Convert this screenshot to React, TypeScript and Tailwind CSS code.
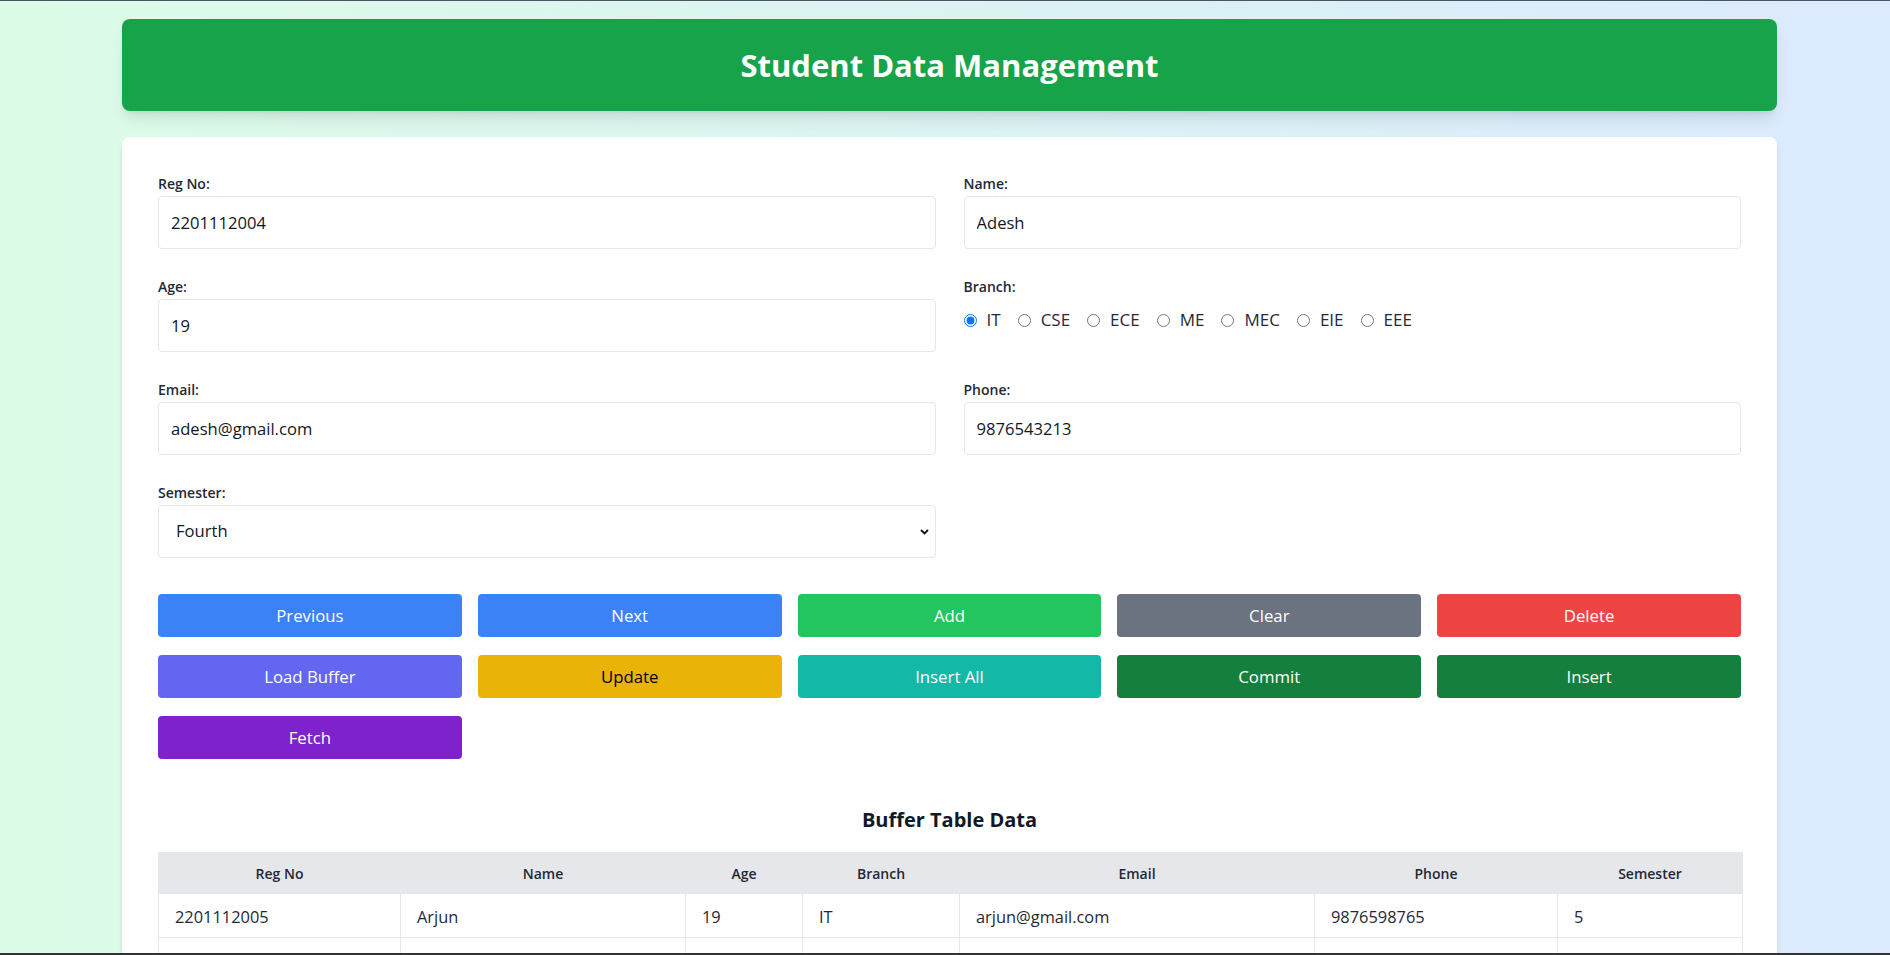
import React from "react";

const font = { fontFamily: '"Open Sans", "Noto Sans", Arial, sans-serif' };

const branches = ["IT", "CSE", "ECE", "ME", "MEC", "EIE", "EEE"];

const buttons: { text: string; cls: string }[] = [
  { text: "Previous", cls: "bg-[#3b82f6] text-white" },
  { text: "Next", cls: "bg-[#3b82f6] text-white" },
  { text: "Add", cls: "bg-[#22c55e] text-white" },
  { text: "Clear", cls: "bg-[#6b7280] text-white" },
  { text: "Delete", cls: "bg-[#ef4444] text-white" },
  { text: "Load Buffer", cls: "bg-[#6366f1] text-white" },
  { text: "Update", cls: "bg-[#eab308] text-black" },
  { text: "Insert All", cls: "bg-[#14b8a6] text-white" },
  { text: "Commit", cls: "bg-[#15803d] text-white" },
  { text: "Insert", cls: "bg-[#15803d] text-white" },
  { text: "Fetch", cls: "bg-[#7e22ce] text-white" },
];

const cols = [
  { h: "Reg No", w: 242 },
  { h: "Name", w: 285 },
  { h: "Age", w: 117 },
  { h: "Branch", w: 157 },
  { h: "Email", w: 355 },
  { h: "Phone", w: 243 },
  { h: "Semester", w: 185 },
];

const rows = [
  ["2201112005", "Arjun", "19", "IT", "arjun@gmail.com", "9876598765", "5"],
  ["2201112006", "Rahul", "20", "CSE", "rahul@gmail.com", "9876512345", "4"],
  ["2201112007", "Sneha", "19", "ECE", "sneha@gmail.com", "9876554321", "3"],
];

function Field({ label, value }: { label: string; value: string }) {
  return (
    <div className="flex flex-col">
      <label className="text-[14px] leading-5 font-semibold text-[#1f2937] mb-[2px]">{label}</label>
      <input
        readOnly
        value={value}
        className="h-[53px] w-full rounded-[4px] border border-[#e5e7eb] bg-white px-3 text-[16.6px] text-[#111827] outline-none"
        style={font}
      />
    </div>
  );
}

export default function App() {
  return (
    <div className="min-h-screen w-full border-t border-[#4b5563] bg-linear-to-r from-[#dcfce7] to-[#dbeafe]" style={font}>
      <div className="ml-[122px] w-[1655px] pt-[18px]">
        <header className="flex h-[92px] items-center justify-center rounded-lg bg-[#16a34a] shadow-lg">
          <h1 className="text-[31px] font-bold text-white">Student Data Management</h1>
        </header>

        <main className="mt-[26px] rounded-lg bg-white px-9 pt-[37px] pb-10 shadow-md">
          <div className="grid grid-cols-2 gap-x-7 gap-y-7">
            <Field label="Reg No:" value="2201112004" />
            <Field label="Name:" value="Adesh" />
            <Field label="Age:" value="19" />
            <div className="flex flex-col">
              <span className="text-[14px] leading-5 font-semibold text-[#1f2937]">Branch:</span>
              <div className="mt-[11px] flex h-6 items-center gap-[17px]">
                {branches.map((b) => (
                  <label key={b} className="flex items-center gap-[10px] text-[17px] text-[#1f2937]">
                    <input type="radio" name="branch" readOnly checked={b === "IT"} className="m-0 h-[13px] w-[13px]" />
                    {b}
                  </label>
                ))}
              </div>
            </div>
            <Field label="Email:" value="adesh@gmail.com" />
            <Field label="Phone:" value="9876543213" />
            <div className="flex flex-col">
              <label className="text-[14px] leading-5 font-semibold text-[#1f2937] mb-[2px]">Semester:</label>
              <div className="relative">
                <select
                  className="h-[53px] w-full appearance-none rounded-[4px] border border-[#e5e7eb] bg-white pl-[17px] text-[16.6px] text-[#111827] outline-none"
                  style={font}
                  defaultValue="Fourth"
                >
                  <option>First</option>
                  <option>Second</option>
                  <option>Third</option>
                  <option>Fourth</option>
                  <option>Fifth</option>
                  <option>Sixth</option>
                  <option>Seventh</option>
                  <option>Eighth</option>
                </select>
                <svg
                  className="pointer-events-none absolute right-[7px] top-1/2 -translate-y-1/2"
                  width="9"
                  height="6"
                  viewBox="0 0 9 6"
                >
                  <path d="M1 1 L4.5 4.5 L8 1" fill="none" stroke="#111" strokeWidth="1.8" />
                </svg>
              </div>
            </div>
          </div>

          <div className="mt-9 grid grid-cols-5 gap-x-4 gap-y-[18px]">
            {buttons.map((b) => (
              <button key={b.text} className={`h-[43px] rounded-[4px] text-[16.8px] ${b.cls}`} style={font}>
                {b.text}
              </button>
            ))}
          </div>

          <h2 className="mt-[47px] mb-[18px] text-center text-[20px] leading-7 font-bold text-[#111827]">
            Buffer Table Data
          </h2>

          <table className="w-full table-fixed border-collapse">
            <colgroup>
              {cols.map((c) => (
                <col key={c.h} style={{ width: c.w }} />
              ))}
            </colgroup>
            <thead>
              <tr className="bg-[#e5e7eb]">
                {cols.map((c) => (
                  <th
                    key={c.h}
                    className="h-[41px] border border-[#e5e7eb] px-4 text-center text-[14px] font-semibold text-[#1f2937]"
                  >
                    {c.h}
                  </th>
                ))}
              </tr>
            </thead>
            <tbody>
              {rows.map((r) => (
                <tr key={r[0]}>
                  {r.map((v, i) => (
                    <td key={i} className="h-[44px] border border-[#e5e7eb] px-4 pt-[3px] text-[16.4px] text-[#1f2937]">
                      {v}
                    </td>
                  ))}
                </tr>
              ))}
            </tbody>
          </table>
        </main>
      </div>
      <div className="fixed bottom-0 left-0 h-[2px] w-full bg-[#333]" />
    </div>
  );
}
